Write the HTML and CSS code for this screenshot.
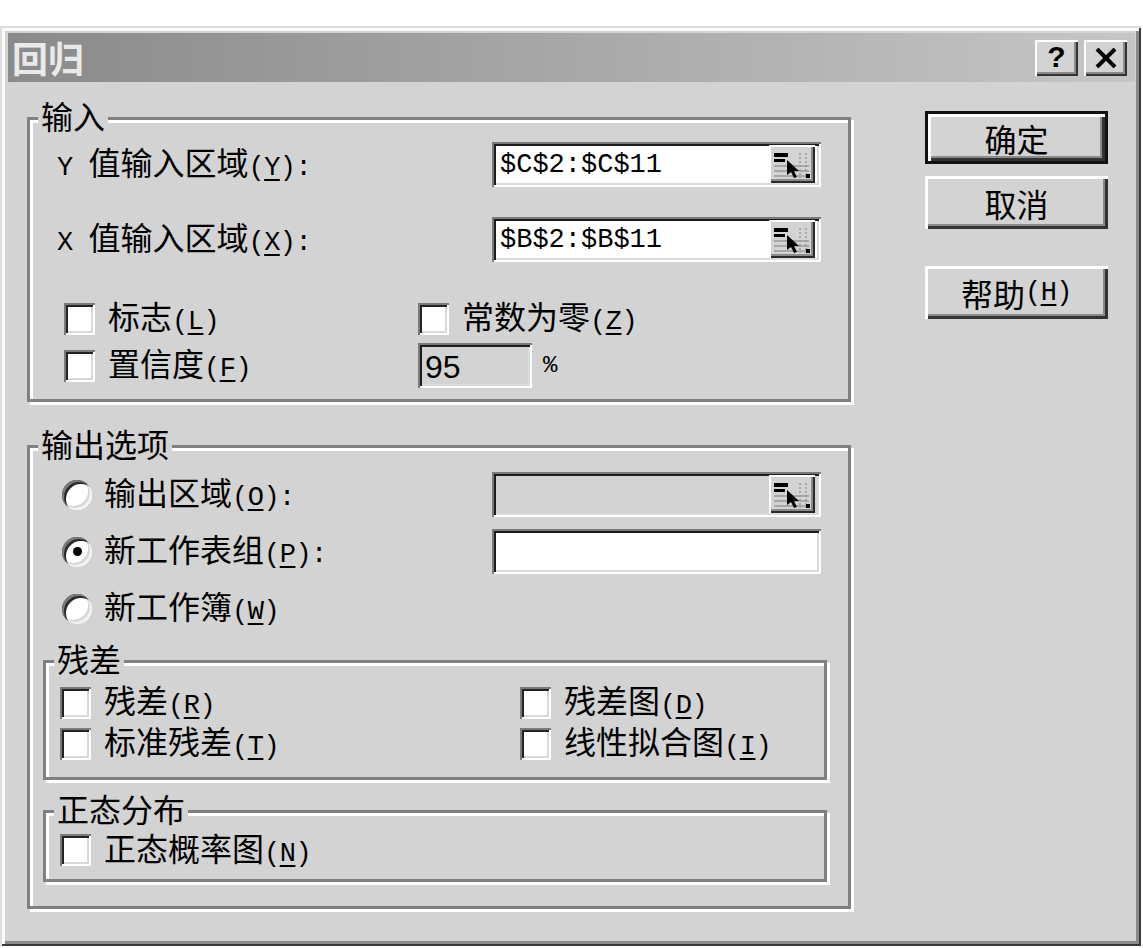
FILE: index.html
```html
<!DOCTYPE html>
<html lang="zh-CN">
<head>
    <meta charset="UTF-8">
    <meta name="viewport" content="width=device-width, initial-scale=1.0">
    <title>回归</title>
    <link rel="stylesheet" href="styles.css">
</head>
<body>
    <div class="dialog">
        <div class="titlebar">
            <span class="title">回归</span>
            <span class="title-btns">
                <span class="tbtn help">?</span>
                <span class="tbtn close">
                    <svg width="22" height="20" viewBox="0 0 22 20"><path d="M2 1 L20 19 M20 1 L2 19" stroke="#000" stroke-width="4"/></svg>
                </span>
            </span>
        </div>

        <div class="content">
            <div class="main-col">
                <fieldset class="group">
                    <legend>输入</legend>
                    <div class="body-input">
                        <div class="field-row">
                            <span class="lbl"><span class="mono">Y </span>值输入区域<span class="mono">(<u>Y</u>):</span></span>
                            <span class="refedit">
                                <span class="ref-val">$C$2:$C$11</span>
                                <span class="ref-btn">
                                    <svg width="46" height="38" viewBox="0 0 46 38"><rect x="5" y="8" width="14" height="4"/><rect x="5" y="14" width="11" height="3"/><path d="M5 21 H40 M5 26 H40 M5 31 H40" stroke="#999" stroke-width="1.5"/><path d="M31 8 V33 M37 8 V33" stroke="#999" stroke-width="1.5" stroke-dasharray="2 2"/><polygon points="18,15 18,30 22,27 25,33 28,32 25,26 30,26"/><rect x="37" y="29" width="4" height="4"/></svg>
                                </span>
                            </span>
                        </div>
                        <div class="field-row">
                            <span class="lbl"><span class="mono">X </span>值输入区域<span class="mono">(<u>X</u>):</span></span>
                            <span class="refedit">
                                <span class="ref-val">$B$2:$B$11</span>
                                <span class="ref-btn">
                                    <svg width="46" height="38" viewBox="0 0 46 38"><rect x="5" y="8" width="14" height="4"/><rect x="5" y="14" width="11" height="3"/><path d="M5 21 H40 M5 26 H40 M5 31 H40" stroke="#999" stroke-width="1.5"/><path d="M31 8 V33 M37 8 V33" stroke="#999" stroke-width="1.5" stroke-dasharray="2 2"/><polygon points="18,15 18,30 22,27 25,33 28,32 25,26 30,26"/><rect x="37" y="29" width="4" height="4"/></svg>
                                </span>
                            </span>
                        </div>
                        <div class="opts opts-input">
                            <label class="chk"><span class="box"></span><span>标志<span class="mono">(<u>L</u>)</span></span></label>
                            <label class="chk"><span class="box"></span><span>常数为零<span class="mono">(<u>Z</u>)</span></span></label>
                            <label class="chk"><span class="box"></span><span>置信度<span class="mono">(<u>F</u>)</span></span></label>
                            <span class="conf">
                                <span class="numbox">95</span>
                                <span class="mono pct">%</span>
                            </span>
                        </div>
                    </div>
                </fieldset>

                <fieldset class="group group-out">
                    <legend>输出选项</legend>
                    <div class="body-output">
                        <div class="radio-row">
                            <label class="rad"><span class="radio"></span><span>输出区域<span class="mono">(<u>O</u>):</span></span></label>
                            <span class="refedit disabled">
                                <span class="ref-val"></span>
                                <span class="ref-btn">
                                    <svg width="46" height="38" viewBox="0 0 46 38"><rect x="5" y="8" width="14" height="4"/><rect x="5" y="14" width="11" height="3"/><path d="M5 21 H40 M5 26 H40 M5 31 H40" stroke="#999" stroke-width="1.5"/><path d="M31 8 V33 M37 8 V33" stroke="#999" stroke-width="1.5" stroke-dasharray="2 2"/><polygon points="18,15 18,30 22,27 25,33 28,32 25,26 30,26"/><rect x="37" y="29" width="4" height="4"/></svg>
                                </span>
                            </span>
                        </div>
                        <div class="radio-row">
                            <label class="rad"><span class="radio"><span class="dot"></span></span><span>新工作表组<span class="mono">(<u>P</u>):</span></span></label>
                            <span class="refedit"></span>
                        </div>
                        <div class="radio-row">
                            <label class="rad"><span class="radio"></span><span>新工作簿<span class="mono">(<u>W</u>)</span></span></label>
                        </div>

                        <fieldset class="group sub">
                            <legend>残差</legend>
                            <div class="body-sub">
                                <div class="opts opts-sub">
                                    <label class="chk"><span class="box"></span><span>残差<span class="mono">(<u>R</u>)</span></span></label>
                                    <label class="chk"><span class="box"></span><span>残差图<span class="mono">(<u>D</u>)</span></span></label>
                                    <label class="chk"><span class="box"></span><span>标准残差<span class="mono">(<u>T</u>)</span></span></label>
                                    <label class="chk"><span class="box"></span><span>线性拟合图<span class="mono">(<u>I</u>)</span></span></label>
                                </div>
                            </div>
                        </fieldset>

                        <fieldset class="group sub sub-normal">
                            <legend>正态分布</legend>
                            <div class="body-normal">
                                <label class="chk"><span class="box"></span><span>正态概率图<span class="mono">(<u>N</u>)</span></span></label>
                            </div>
                        </fieldset>
                    </div>
                </fieldset>
            </div>

            <div class="btn-col">
                <div class="btn default">确定</div>
                <div class="btn">取消</div>
                <div class="btn help-btn">帮助<span class="mono">(<u>H</u>)</span></div>
            </div>
        </div>
    </div>
</body>
</html>
```

FILE: styles.css
```css
* {
    margin: 0;
    padding: 0;
    box-sizing: border-box;
}

body {
    background: #fff;
    font-family: "Noto Sans CJK SC", sans-serif;
    font-size: 32px;
    line-height: 36px;
    color: #000;
}

.dialog {
    width: 1141px;
    height: 920px;
    margin-top: 26px;
    padding: 7px 6px 6px 8px;
    background: #d3d3d3;
    box-shadow: inset 2px 2px 0 #dedede, inset -2px -2px 0 #3a3a3a,
                inset 5px 5px 0 #fafafa, inset -5px -5px 0 #8a8a8a;
}

/* title bar */
.titlebar {
    height: 49px;
    display: flex;
    align-items: center;
    justify-content: space-between;
    padding-left: 4px;
    background: linear-gradient(90deg, #8a8a8a, #c6c6c6);
}

.title {
    font-weight: 700;
    font-size: 36px;
    line-height: 49px;
    color: #e9e9e9;
}

.title-btns {
    display: flex;
    gap: 6px;
    margin-right: 8px;
}

.tbtn {
    width: 43px;
    height: 36px;
    display: flex;
    align-items: center;
    justify-content: center;
    background: #d3d3d3;
    box-shadow: inset 2px 2px 0 #fff, inset -2px -2px 0 #333,
                inset -4px -4px 0 #8a8a8a;
}

.tbtn.help {
    font-family: "Liberation Sans", sans-serif;
    font-weight: 700;
    font-size: 30px;
    padding-bottom: 2px;
}

/* layout */
.content {
    display: flex;
    gap: 74px;
    padding: 15px 0 0 19px;
}

.main-col {
    width: 824px;
    display: flex;
    flex-direction: column;
}

/* etched group frames */
.group {
    border: 3px solid #808080;
    box-shadow: 3px 3px 0 #fff, inset 3px 3px 0 #fff;
    min-width: 0;
}

.group legend {
    margin-left: 8px;
    padding: 0 3px 6px;
    line-height: 36px;
    background: #d3d3d3;
}

.group-out {
    margin-top: 23px;
}

.body-input {
    padding: 3px 27px 11px 27px;
}

.field-row {
    height: 45px;
    display: flex;
    align-items: center;
    justify-content: space-between;
}

.field-row + .field-row {
    margin-top: 30px;
}

.mono {
    font-family: "Liberation Mono", monospace;
    font-size: 27px;
    letter-spacing: -0.5px;
}

.mono u {
    text-decoration-thickness: 2px;
    text-underline-offset: 4px;
}

/* sunken edit fields */
.refedit {
    width: 329px;
    height: 45px;
    display: flex;
    align-items: flex-start;
    padding: 3px 6px 4px 4px;
    background: #fff;
    box-shadow: inset 2px 2px 0 #7a7a7a, inset -2px -2px 0 #fff,
                inset 4px 4px 0 #1c1c1c, inset -4px -4px 0 #dcdcdc;
}

.refedit.disabled {
    background: #d3d3d3;
}

.ref-val {
    flex: 1;
    padding-left: 4px;
    font-family: "Liberation Mono", monospace;
    font-size: 27px;
    line-height: 40px;
}

.ref-btn {
    width: 46px;
    height: 38px;
    display: flex;
    background: #d3d3d3;
    box-shadow: inset 2px 2px 0 #fff, inset -2px -2px 0 #2a2a2a,
                inset -4px -4px 0 #8a8a8a;
}

/* checkboxes */
.opts {
    display: grid;
}

.opts-input {
    grid-template-columns: 354px auto;
    grid-auto-rows: 45px;
    row-gap: 2px;
    margin: 34px 0 0 7px;
}

.chk, .rad {
    display: flex;
    align-items: center;
}

.box {
    width: 31px;
    height: 32px;
    flex-shrink: 0;
    margin-right: 13px;
    background: #fff;
    box-shadow: inset 2px 2px 0 #7a7a7a, inset -2px -2px 0 #fff,
                inset 4px 4px 0 #222, inset -4px -4px 0 #d8d8d8;
}

.conf {
    display: flex;
    align-items: center;
    gap: 11px;
}

.numbox {
    width: 114px;
    height: 45px;
    padding: 4px 0 0 7px;
    font-family: "Liberation Sans", sans-serif;
    font-size: 32px;
    line-height: 40px;
    box-shadow: inset 2px 2px 0 #7a7a7a, inset -2px -2px 0 #fff,
                inset 4px 4px 0 #1c1c1c, inset -4px -4px 0 #dcdcdc;
}

.pct {
    font-size: 24px;
}

/* output options */
.body-output {
    padding: 5px 21px 24px 13px;
}

.radio-row {
    height: 45px;
    display: flex;
    align-items: center;
    justify-content: space-between;
    padding: 0 6px 0 19px;
}

.radio-row + .radio-row {
    margin-top: 12px;
}

.radio {
    width: 30px;
    height: 30px;
    flex-shrink: 0;
    margin-right: 12px;
    display: flex;
    align-items: center;
    justify-content: center;
    border-radius: 50%;
    background: #fff;
    box-shadow: inset 2px 2px 0 #7a7a7a, inset -2px -2px 0 #f4f4f4,
                inset 4px 4px 0 #2a2a2a, inset -4px -4px 0 #d8d8d8;
}

.dot {
    width: 9px;
    height: 9px;
    border-radius: 50%;
    background: #000;
}

.sub {
    margin-top: 9px;
}

.sub-normal {
    margin-top: 10px;
}

.body-sub {
    padding: 0 14px 13px;
}

.opts-sub {
    grid-template-columns: 460px auto;
    grid-auto-rows: 41px;
}

.body-normal {
    height: 47px;
    padding: 0 14px 11px;
    display: flex;
    align-items: center;
}

/* buttons */
.btn-col {
    width: 183px;
    margin-top: 14px;
    display: flex;
    flex-direction: column;
    gap: 12px;
}

.btn {
    height: 53px;
    display: flex;
    align-items: center;
    justify-content: center;
    background: #d3d3d3;
    box-shadow: inset 3px 3px 0 #fff, inset -3px -3px 0 #333,
                inset -5px -5px 0 #8a8a8a;
}

.btn.default {
    border: 3px solid #111;
}

.btn.help-btn {
    margin-top: 25px;
}
```
